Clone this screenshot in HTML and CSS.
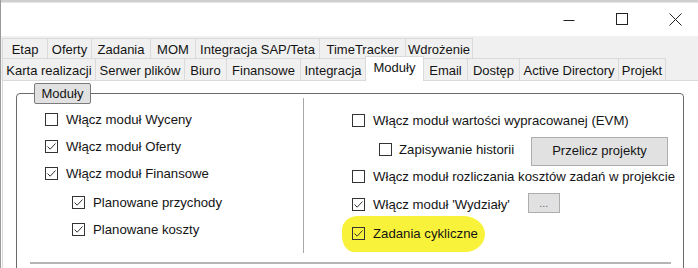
FILE: index.html
```html
<!DOCTYPE html>
<html lang="pl">
<head>
<meta charset="utf-8">
<title>Moduły</title>
<link rel="stylesheet" href="styles.css">
</head>
<body>
<div class="window">
  <div class="topstrip"></div>
  <div class="titlebar">
    <div class="controls">
      <svg class="ctl" width="12" height="12" viewBox="0 0 12 12"><path d="M0.5 5.5H11.5" stroke="#222" stroke-width="1"/></svg>
      <svg class="ctl" width="12" height="12" viewBox="0 0 12 12"><rect x="0.5" y="0.5" width="11" height="11" fill="none" stroke="#222" stroke-width="1"/></svg>
      <svg class="ctl" width="13" height="13" viewBox="0 0 13 13"><path d="M0.5 0.5L12.5 12.5M12.5 0.5L0.5 12.5" stroke="#222" stroke-width="1"/></svg>
    </div>
  </div>
  <div class="tabstrip">
    <div class="tabrow row1">
      <div class="tab t-etap">Etap</div>
      <div class="tab t-oferty">Oferty</div>
      <div class="tab t-zadania">Zadania</div>
      <div class="tab t-mom">MOM</div>
      <div class="tab t-sap">Integracja SAP/Teta</div>
      <div class="tab t-tt">TimeTracker</div>
      <div class="tab t-wdr">Wdrożenie</div>
    </div>
    <div class="tabrow row2">
      <div class="tab t-karta">Karta realizacji</div>
      <div class="tab t-serwer">Serwer plików</div>
      <div class="tab t-biuro">Biuro</div>
      <div class="tab t-fin">Finansowe</div>
      <div class="tab t-int">Integracja</div>
      <div class="tab t-mod selected">Moduły</div>
      <div class="tab t-email">Email</div>
      <div class="tab t-dost">Dostęp</div>
      <div class="tab t-ad">Active Directory</div>
      <div class="tab t-proj">Projekt</div>
    </div>
  </div>
  <div class="page">
    <div class="group">
      <div class="legend">Moduły</div>
      <div class="cols">
        <div class="col left">
          <div class="row"><span class="cb"></span><span class="lbl">Włącz moduł Wyceny</span></div>
          <div class="row"><span class="cb"><svg width="13" height="13" viewBox="0 0 13 13"><path d="M2.5 6.5L5.2 9.2L10.5 3.5" fill="none" stroke="#333" stroke-width="1"/></svg></span><span class="lbl">Włącz moduł Oferty</span></div>
          <div class="row"><span class="cb"><svg width="13" height="13" viewBox="0 0 13 13"><path d="M2.5 6.5L5.2 9.2L10.5 3.5" fill="none" stroke="#333" stroke-width="1"/></svg></span><span class="lbl">Włącz moduł Finansowe</span></div>
          <div class="row sub first-sub"><span class="cb"><svg width="13" height="13" viewBox="0 0 13 13"><path d="M2.5 6.5L5.2 9.2L10.5 3.5" fill="none" stroke="#333" stroke-width="1"/></svg></span><span class="lbl">Planowane przychody</span></div>
          <div class="row sub"><span class="cb"><svg width="13" height="13" viewBox="0 0 13 13"><path d="M2.5 6.5L5.2 9.2L10.5 3.5" fill="none" stroke="#333" stroke-width="1"/></svg></span><span class="lbl">Planowane koszty</span></div>
        </div>
        <div class="col right">
          <div class="rrow r1"><span class="cb"></span><span class="lbl">Włącz moduł wartości wypracowanej (EVM)</span></div>
          <div class="rrow r2"><span class="cb"></span><span class="lbl">Zapisywanie historii</span><button class="btn btn-recalc">Przelicz projekty</button></div>
          <div class="rrow r3"><span class="cb"></span><span class="lbl">Włącz moduł rozliczania kosztów zadań w projekcie</span></div>
          <div class="rrow r4"><span class="cb"><svg width="13" height="13" viewBox="0 0 13 13"><path d="M2.5 6.5L5.2 9.2L10.5 3.5" fill="none" stroke="#333" stroke-width="1"/></svg></span><span class="lbl">Włącz moduł 'Wydziały'</span><button class="btn btn-dots">...</button></div>
          <div class="rrow r5"><span class="highlight"></span><span class="cb"><svg width="13" height="13" viewBox="0 0 13 13"><path d="M2.5 6.5L5.2 9.2L10.5 3.5" fill="none" stroke="#333" stroke-width="1"/></svg></span><span class="lbl">Zadania cykliczne</span></div>
        </div>
      </div>
      <div class="rule"></div>
    </div>
  </div>
</div>
</body>
</html>
```
FILE: styles.css
```css
html, body {
  margin: 0;
  padding: 0;
  width: 698px;
  height: 268px;
  overflow: hidden;
  background: #fff;
}
body {
  font-family: "Liberation Sans", Arial, sans-serif;
  font-size: 13px;
  color: #141414;
}
.window {
  width: 698px;
  height: 268px;
  border-left: 1px solid #9a9a9a;
  box-sizing: border-box;
  display: flex;
  flex-direction: column;
  overflow: hidden;
}
.topstrip {
  height: 3px;
  background: #cfcfcf;
  border-bottom: 1px solid #e6e6e6;
  box-sizing: border-box;
  flex: none;
}
.titlebar {
  height: 33px;
  background: #fff;
  display: flex;
  justify-content: flex-end;
  align-items: flex-start;
  flex: none;
}
.controls {
  display: flex;
  align-items: flex-start;
  padding-top: 10px;
  padding-right: 16px;
  gap: 41px;
}
.ctl { display: block; }
.controls .ctl:first-child { margin-top: 2px; }
.tabstrip {
  background: #f0f0f0;
  padding-top: 2px;
  flex: none;
}
.tabrow {
  display: flex;
  padding-left: 1px;
}
.row1 { height: 20px; }
.row2 { height: 22px; }
.tab {
  box-sizing: border-box;
  border: 1px solid #dadada;
  border-bottom: none;
  margin-right: -1px;
  background: #f0f0f0;
  display: flex;
  align-items: center;
  justify-content: center;
  white-space: nowrap;
  color: #141414;
  flex: none;
}
.row1 .tab { height: 20px; padding-top: 1px; }
.row2 .tab { height: 22px; padding-top: 1px; }
.tab.selected {
  background: #fff;
  height: 25px;
  margin-top: -2px;
  margin-bottom: -1px;
  position: relative;
  z-index: 2;
  padding-top: 0;
  padding-bottom: 4px;
}
.t-etap { width: 46px; }
.t-oferty { width: 45px; }
.t-zadania { width: 60px; }
.t-mom { width: 46px; }
.t-sap { width: 125px; }
.t-tt { width: 87px; }
.t-wdr { width: 68px; }
.t-karta { width: 94px; }
.t-serwer { width: 90px; }
.t-biuro { width: 43px; }
.t-fin { width: 75px; }
.t-int { width: 66px; }
.t-mod { width: 59px; }
.t-email { width: 45px; }
.t-dost { width: 53px; }
.t-ad { width: 100px; }
.t-proj { width: 48px; }

.page {
  flex: 1;
  background: #fff;
  border-top: 1px solid #dadada;
  border-left: 1px solid #dadada;
  margin-left: 1px;
  padding-left: 13px;
  padding-top: 12px;
  position: relative;
  z-index: 1;
}
.group {
  position: relative;
  width: 668px;
  height: 200px;
  box-sizing: border-box;
  border: 1px solid #6a6a6a;
  border-radius: 4px;
}
.legend {
  position: absolute;
  left: 17px;
  top: -11px;
  width: 57px;
  height: 21px;
  box-sizing: border-box;
  background: #e1e1e1;
  border: 1px solid #7a7a7a;
  border-radius: 2px;
  display: flex;
  align-items: center;
  justify-content: center;
  padding-bottom: 1px;
}
.cols {
  display: flex;
  margin-top: 4px;
  height: 155px;
}
.col { box-sizing: border-box; }
.col.left {
  flex: none;
  width: 287px;
  border-right: 1px solid #a8a8a8;
  padding-top: 8px;
  padding-left: 28px;
}
.col.right {
  flex: 1;
  min-width: 0;
  padding-top: 9px;
  padding-left: 48px;
  padding-right: 15px;
}
.row, .rrow {
  display: flex;
  align-items: center;
  height: 27px;
  position: relative;
}
.row.sub { padding-left: 27px; }
.row.first-sub { margin-top: 2px; }
.cb {
  width: 13px;
  height: 13px;
  box-sizing: border-box;
  border: 1px solid #333;
  flex: none;
  position: relative;
  z-index: 1;
}
.cb svg {
  display: block;
  margin: -1px;
}
.lbl {
  margin-left: 8px;
  white-space: nowrap;
  position: relative;
  z-index: 1;
  font-size: 13.2px;
}
.r2 { height: 30px; padding-left: 27px; }
.r2 .lbl { margin-left: 7px; }
.r3 { height: 25px; }
.r4 { height: 30px; }
.r5 { height: 28px; }
.btn {
  font-family: inherit;
  font-size: 13px;
  color: #141414;
  background: #e1e1e1;
  border: 1px solid #adadad;
  border-radius: 0;
  padding: 0;
  box-sizing: border-box;
  flex: none;
}
.btn-recalc {
  width: 137px;
  height: 29px;
  margin-left: auto;
  margin-top: 4px;
  padding-bottom: 2px;
}
.btn-dots {
  width: 32px;
  height: 20px;
  margin-left: 18px;
  margin-top: -2px;
  color: #666;
  font-size: 11px;
  line-height: 14px;
}
.highlight {
  position: absolute;
  left: -10px;
  top: -3px;
  width: 143px;
  height: 36px;
  background: #f9f23b;
  border-radius: 16px 22px 20px 12px / 14px 18px 18px 16px;
  z-index: 0;
}
.rule {
  margin: 9px 12px 0 13px;
  height: 2px;
  background: #b5b5b5;
}
```
